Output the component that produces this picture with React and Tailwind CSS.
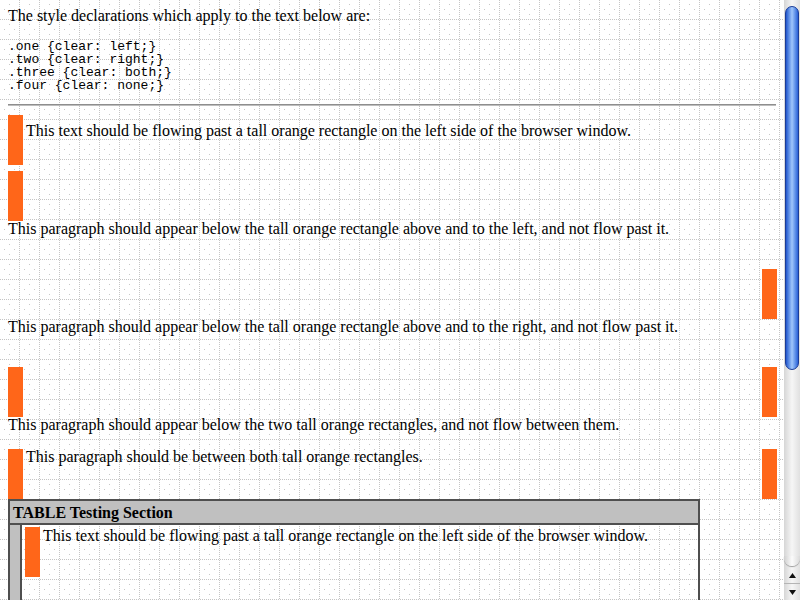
import React from 'react';

function GridBackdrop() {
  // the dotted test-suite grid behind the whole page
  return (
    <svg className="pointer-events-none absolute inset-0" width="100%" height="100%" shapeRendering="crispEdges">
      <defs>
        <pattern id="grid" width="20" height="20" patternUnits="userSpaceOnUse">
          {[0, 2, 4, 6, 8, 10, 12, 14, 16, 18].map((i) => (
            <React.Fragment key={i}>
              <rect x="19" y={i} width="1" height="1" fill="#c4c4c4" />
              <rect x={i} y="19" width="1" height="1" fill="#c4c4c4" />
            </React.Fragment>
          ))}
          <rect x="9" y="4" width="1" height="1" fill="#c8c8c8" />
          <rect x="4" y="9" width="1" height="1" fill="#c8c8c8" />
          <rect x="14" y="9" width="1" height="1" fill="#c8c8c8" />
          <rect x="9" y="14" width="1" height="1" fill="#c8c8c8" />
        </pattern>
      </defs>
      <rect width="100%" height="100%" fill="url(#grid)" />
    </svg>
  );
}

function Rect() {
  return <div className="h-[50px] w-[15px] shrink-0 bg-[#ff6619]" />;
}

function Scrollbar() {
  return (
    <div className="flex h-full w-4 shrink-0 flex-col bg-gradient-to-r from-[#d6d6d6] via-[#f6f6f6] to-[#e0e0e0]">
      <div className="mx-auto mt-[6px] h-[364px] w-[14px] rounded-full border border-[#1a3c98] bg-gradient-to-r from-[#2154cc] via-[#a0c6fb] to-[#2a60d6]" />
      <div className="flex-1" />
      <div className="h-[10px] rounded-b-full bg-gradient-to-r from-[#cfcfcf] via-[#fbfbfb] to-[#dadada] shadow-[0_1px_1px_#9a9a9a]" />
      <div className="mt-[2px] flex h-[16px] items-center justify-center border-b border-[#b4b4b4]">
        <svg width="7" height="5" viewBox="0 0 7 5">
          <path d="M3.5 0L7 5H0Z" fill="#111" />
        </svg>
      </div>
      <div className="flex h-[16px] items-center justify-center">
        <svg width="7" height="5" viewBox="0 0 7 5">
          <path d="M0 0H7L3.5 5Z" fill="#111" />
        </svg>
      </div>
    </div>
  );
}

export default function App() {
  return (
    <div className="flex h-[600px] w-[800px] overflow-hidden bg-white text-black">
      <div className="relative h-full flex-1 overflow-hidden">
        <GridBackdrop />
        <div className="relative px-2 pt-2 font-['Liberation_Serif',serif] text-[16px] leading-[14px]">
          <p className="whitespace-nowrap pt-px">The style declarations which apply to the text below are:</p>
          <pre className="mt-[17px] font-['Liberation_Mono',monospace] text-[13px] leading-[13px]">
{`.one {clear: left;}
.two {clear: right;}
.three {clear: both;}
.four {clear: none;}`}
          </pre>
          <div className="mt-[12px] h-[2px] border-t border-b border-t-[#8e8e8e] border-b-[#bdbdbd]" />

          {/* clear: left */}
          <div className="mt-[9px] flex h-[50px]">
            <Rect />
            <p className="ml-[3px] mt-[9px] whitespace-nowrap">
              This text should be flowing past a tall orange rectangle on the left side of the browser window.
            </p>
          </div>
          <div className="mt-[6px] flex">
            <Rect />
          </div>
          <p className="whitespace-nowrap pt-px">
            This paragraph should appear below the tall orange rectangle above and to the left, and not flow past it.
          </p>

          {/* clear: right */}
          <div className="mr-[-1px] mt-[33px] flex justify-end">
            <Rect />
          </div>
          <p className="whitespace-nowrap pt-px">
            This paragraph should appear below the tall orange rectangle above and to the right, and not flow past it.
          </p>

          {/* clear: both */}
          <div className="mr-[-1px] mt-[33px] flex justify-between">
            <Rect />
            <Rect />
          </div>
          <p className="whitespace-nowrap pt-px">
            This paragraph should appear below the two tall orange rectangles, and not flow between them.
          </p>

          {/* clear: none */}
          <div className="mr-[-1px] mt-[17px] flex h-[50px]">
            <Rect />
            <p className="ml-[3px] flex-1 whitespace-nowrap pt-px">This paragraph should be between both tall orange rectangles.</p>
            <Rect />
          </div>

          {/* table section */}
          <div className="w-[692px] border-2 border-[#4f4f4f]">
            <div className="h-[24px] border-b-2 border-[#4f4f4f] bg-[#c0c0c0] pl-[3px] pt-px font-bold leading-[21px]">
              TABLE Testing Section
            </div>
            <div className="flex h-[120px]">
              <div className="w-[12px] border-r-2 border-[#4f4f4f] bg-[#c0c0c0]" />
              <div className="flex flex-1 pl-[3px] pt-[2px]">
                <Rect />
                <p className="ml-[3px] mt-[2px] whitespace-nowrap">
                  This text should be flowing past a tall orange rectangle on the left side of the browser window.
                </p>
              </div>
            </div>
          </div>
        </div>
      </div>
      <Scrollbar />
    </div>
  );
}
